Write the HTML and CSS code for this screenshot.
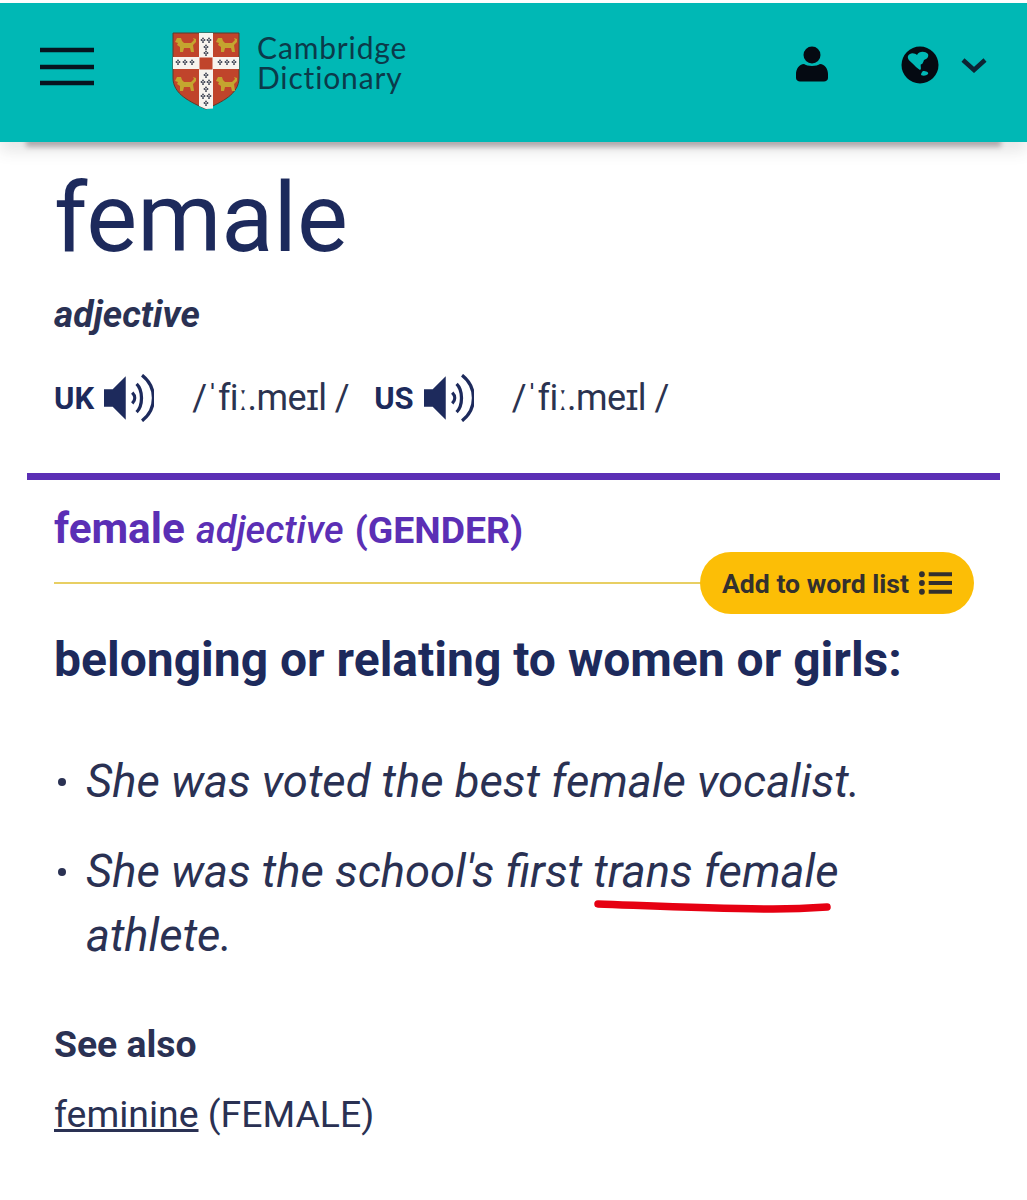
FILE: index.html
```html
<!DOCTYPE html>
<html lang="en">
<head>
<meta charset="utf-8">
<title>female - Cambridge Dictionary</title>
<link rel="stylesheet" href="styles.css">
</head>
<body>
<header class="topbar">
  <svg class="burger" viewBox="0 0 54 42"><path d="M0 3H54M0 20H54M0 36H54"/></svg>
  <svg class="crest" viewBox="0 0 68 78">
    <defs>
      <path id="lion" d="M1 5L3 1H7L8 4L10 6H17L20 3L19 1L22 2L22 5L19 8L20 15H17L16 11H10L9 15L6 15L6 10L3 8L4 6Z"/>
      <g id="ermine"><circle cx="0" cy="-1.600" r=".9"/><circle cx="-1.500" cy="0" r=".9"/><circle cx="1.500" cy="0" r=".9"/><path d="M-.5 0H.5L.8 3H-.8Z"/></g>
    </defs>
    <path class="crest-red" d="M1 1H67V46C67 62 50 70 34 77C18 70 1 62 1 46Z"/>
    <path class="crest-white" d="M27 1H41V25H67V37H41V76.500L34 77L27 74V37H1V25H27Z"/>
    <rect class="crest-centre" x="27.500" y="25.500" width="13" height="12"/>
    <g class="crest-lion">
      <use href="#lion" x="2" y="5"/><use href="#lion" x="43" y="5"/>
      <use href="#lion" x="2" y="44"/><use href="#lion" x="43" y="44"/>
    </g>
    <g class="crest-dots">
      <use href="#ermine" x="31" y="8"/><use href="#ermine" x="37" y="8"/><use href="#ermine" x="34" y="15"/><use href="#ermine" x="34" y="21"/>
      <use href="#ermine" x="34" y="43"/><use href="#ermine" x="31" y="50"/><use href="#ermine" x="37" y="50"/><use href="#ermine" x="34" y="57"/><use href="#ermine" x="31" y="64"/><use href="#ermine" x="37" y="64"/><use href="#ermine" x="34" y="71"/>
      <use href="#ermine" x="6" y="30"/><use href="#ermine" x="13" y="30"/><use href="#ermine" x="20" y="30"/>
      <use href="#ermine" x="48" y="30"/><use href="#ermine" x="55" y="30"/><use href="#ermine" x="62" y="30"/>
    </g>
  </svg>
  <div class="brand"><div class="brand-line">Cambridge</div><div class="brand-line">Dictionary</div></div>
  <svg class="user" viewBox="0 0 32 36"><circle cx="16" cy="9" r="8.500"/><path d="M8 18C11 20.500 21 20.500 24 18C29 18.500 32 23 32 28V32C32 34 30 35.500 28 35.500H4C2 35.500 0 34 0 32V28C0 23 3 18.500 8 18Z"/></svg>
  <svg class="globe" viewBox="0 0 38 38"><circle class="globe-disc" cx="19" cy="19" r="18.500"/><path class="globe-land" d="M7 10C9 6 14 7 16 9C18 5 24 5 27 8C28 11 26 13 23 14C22 17 21 19 20 18C19 20 21 23 19 24C16 22 14 20 11 17C9 15 6 13 7 10Z"/><path class="globe-land" d="M22 25C25 25 28 26 27 28C25 30 22 30 20 29C20 27 21 26 22 25Z"/></svg>
  <svg class="chevron" viewBox="0 0 26 16"><path d="M2 3L13 13L24 3"/></svg>
</header>

<main class="entry">
  <h1 class="headword">female</h1>
  <div class="pos">adjective</div>
  <div class="prons">
    <span class="region">UK</span>
    <svg class="speaker" viewBox="0 0 46 44"><path class="speaker-body" d="M0 14H8L20 2V42L8 30H0Z"/><path class="speaker-wave" d="M26 17C29 20 29 24 26 27M30 9C36 15 36 29 30 35M35 1C49 12 49 32 35 43"/></svg>
    <span class="ipa">/ˈfiː.meɪl /</span>
    <span class="region region-us">US</span>
    <svg class="speaker" viewBox="0 0 46 44"><path class="speaker-body" d="M0 14H8L20 2V42L8 30H0Z"/><path class="speaker-wave" d="M26 17C29 20 29 24 26 27M30 9C36 15 36 29 30 35M35 1C49 12 49 32 35 43"/></svg>
    <span class="ipa">/ˈfiː.meɪl /</span>
  </div>
  <div class="rule"></div>
  <h2 class="sense"><b>female</b> <i>adjective</i> <span class="sense-tag">(GENDER)</span></h2>
  <div class="sense-line">
    <button class="wordlist">Add to word list
      <svg class="list-icon" viewBox="0 0 34 26"><path class="list-bars" d="M10 4H34M10 13H34M10 22H34"/><circle cx="3" cy="4" r="3"/><circle cx="3" cy="13" r="3"/><circle cx="3" cy="22" r="3"/></svg>
    </button>
  </div>
  <p class="definition">belonging or relating to women or girls:</p>
  <ul class="examples">
    <li>She was voted the best female vocalist.</li>
    <li>She was the school's first <span class="marked">trans female<svg class="scribble" viewBox="0 0 240 14"><path d="M5 4C60 6 120 9 180 9C200 9 220 8 234 7"/></svg></span> athlete.</li>
  </ul>
  <h3 class="see-also">See also</h3>
  <p class="see-link"><a href="#">feminine</a> (FEMALE)</p>
</main>
</body>
</html>
```
FILE: styles.css
```css
* { box-sizing: border-box; }
html, body { margin: 0; background: #fff; }
body { font-family: Roboto, sans-serif; color: #1d2a57; height: 1200px; overflow: hidden; padding-top: 3px; }

.topbar { height: 139px; background: #00b8b5; display: flex; align-items: flex-start; padding-right: 40px; box-shadow: 0 31px 5px -26px rgba(90,70,80,.38), 0 9px 14px rgba(60,60,60,.13); position: relative; }
.burger { width: 54px; height: 42px; margin: 44px 0 0 40px; flex: none; fill: none; stroke: #07141f; stroke-width: 4.500; }
.crest { width: 68px; height: 78px; margin: 29px 0 0 78px; flex: none; filter: blur(.5px); }
.crest-red { fill: #c0442b; stroke: #5e3a2c; stroke-width: 1; }
.crest-white { fill: #f7f3ee; }
.crest-centre { fill: #c0442b; }
.crest-lion { fill: #c4a52f; }
.crest-dots { fill: #3a4050; }
.brand { font-family: Lato, sans-serif; font-size: 30px; line-height: 30px; color: #0b3a4a; margin: 29px 0 0 17px; letter-spacing: .85px; }
.brand-line { height: 30px; }
.user { width: 32px; height: 36px; margin: 43px 0 0 auto; flex: none; fill: #050a12; }
.globe { width: 38px; height: 38px; margin: 43px 0 0 73px; flex: none; }
.globe-disc { fill: #050a12; }
.globe-land { fill: #00b8b5; }
.chevron { width: 26px; height: 16px; margin: 54px 0 0 22px; flex: none; fill: none; stroke: #0d2433; stroke-width: 4.500; }

.entry { padding: 0 27px; }
.headword { margin: 17px 0 0 27px; font-size: 96px; line-height: 118px; font-weight: 400; color: #1d2a5c; }
.pos { margin: 18px 0 0 27px; font-size: 37px; line-height: 40px; font-weight: 700; font-style: italic; color: #2a3153; }
.prons { display: flex; align-items: center; margin: 38px 0 0 27px; height: 50px; }
.region { font-size: 31px; font-weight: 700; color: #1d2a5c; }
.region-us { margin-left: 25px; }
.speaker { width: 50px; height: 48px; margin-left: 10px; flex: none; }
.speaker-body { fill: #1d2a5c; }
.speaker-wave { fill: none; stroke: #1d2a5c; stroke-width: 3; }
.ipa { font-size: 36px; letter-spacing: -.55px; color: #2b3350; margin-left: 38px; }
.rule { height: 7px; background: #5b2fb5; margin-top: 50px; }

.sense { margin: 27px 0 0 27px; font-size: 37px; line-height: 44px; font-weight: 400; word-spacing: 2px; color: #5b2fb5; }
.sense b { font-size: 42.300px; }
.sense i { font-weight: 500; font-size: 37.800px; }
.sense-tag { font-weight: 700; font-size: 37.400px; }
.sense-line { position: relative; margin: 29px 0 0 27px; height: 2px; background: #e8cf63; width: 660px; }
.wordlist { position: absolute; left: 646px; top: -30px; width: 274px; height: 62px; border: 0; border-radius: 31px; background: #fcbe06; color: #33302e; font: 700 26.600px Roboto, sans-serif; display: flex; align-items: center; justify-content: center; gap: 10px; padding: 0; white-space: nowrap; }
.list-icon { width: 33px; height: 26px; fill: #33302e; }
.list-bars { fill: none; stroke: #33302e; stroke-width: 4; }

.definition { margin: 48px 0 0 27px; font-size: 48px; line-height: 56px; font-weight: 700; color: #1d2a5c; }
.examples { margin: 62px 0 0 27px; padding: 0; list-style: none; max-width: 832px; }
.examples li { position: relative; padding-left: 32px; font-size: 45.400px; line-height: 64px; font-style: italic; color: #2a3153; margin-bottom: 26px; }
.examples li::before { content: ""; position: absolute; left: 4px; top: 28px; width: 8px; height: 8px; border-radius: 50%; background: #2a3153; }
.marked { position: relative; }
.scribble { position: absolute; left: 0; top: 55px; width: 240px; height: 14px; fill: none; stroke: #e60012; stroke-width: 7.500; stroke-linecap: round; overflow: visible; }
.see-also { margin: 54px 0 0 27px; font-size: 37.300px; line-height: 44px; font-weight: 700; color: #2a3153; }
.see-link { margin: 26px 0 0 27px; font-size: 37.400px; line-height: 44px; color: #2a3153; }
.see-link a { color: inherit; }
```
